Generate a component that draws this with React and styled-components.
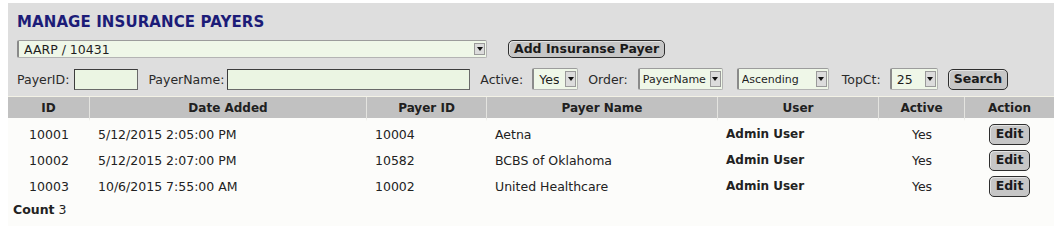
import React from 'react';
import styled, { createGlobalStyle } from 'styled-components';

const GlobalStyle = createGlobalStyle`
  body {
    margin: 0;
    background: #ffffff;
    font-family: "DejaVu Sans", Verdana, sans-serif;
    font-size: 12.5px;
    color: #222;
  }
`;

const columns = [
  { key: 'id', label: 'ID', width: 82, align: 'center' },
  { key: 'added', label: 'Date Added', width: 277 },
  { key: 'payerId', label: 'Payer ID', width: 120 },
  { key: 'name', label: 'Payer Name', width: 231 },
  { key: 'user', label: 'User', width: 161, bold: true },
  { key: 'active', label: 'Active', width: 86, align: 'center' },
  { key: 'action', label: 'Action', width: 89, align: 'center' },
];

const payers = [
  { id: '10001', added: '5/12/2015 2:05:00 PM', payerId: '10004', name: 'Aetna', user: 'Admin User', active: 'Yes' },
  { id: '10002', added: '5/12/2015 2:07:00 PM', payerId: '10582', name: 'BCBS of Oklahoma', user: 'Admin User', active: 'Yes' },
  { id: '10003', added: '10/6/2015 7:55:00 AM', payerId: '10002', name: 'United Healthcare', user: 'Admin User', active: 'Yes' },
];

const DropArrow = () => (
  <ArrowBox>
    <svg width="6" height="4" viewBox="0 0 6 4">
      <path d="M0 0 L6 0 L3 4 Z" fill="#111" />
    </svg>
  </ArrowBox>
);

const Select = ({ value, width, small, tall }) => (
  <SelectBox $width={width} $tall={tall} $small={small}>
    <SelectText $small={small}>{value}</SelectText>
    <DropArrow />
  </SelectBox>
);

export default function App() {
  return (
    <Page>
      <GlobalStyle />
      <Panel>
        <Title>MANAGE INSURANCE PAYERS</Title>
        <PickerRow>
          <Select value="AARP / 10431" width={470} />
          <Button $size="sm">Add Insuranse Payer</Button>
        </PickerRow>
        <FilterRow>
          <Label $first $after={5}>PayerID:</Label>
          <TextInput $width={64} />
          <Label $after={3}>PayerName:</Label>
          <TextInput $width={243} />
          <Label>Active:</Label>
          <Select value="Yes" width={46} tall />
          <Label $after={10}>Order:</Label>
          <Select value="PayerName" width={85} small tall />
          <Spacer />
          <Select value="Ascending" width={92} small tall />
          <Label $before={13} $after={9}>TopCt:</Label>
          <Select value="25" width={48} tall />
          <Button $size="md" $gap={10}>Search</Button>
        </FilterRow>
      </Panel>
      <Grid>
        <colgroup>
          {columns.map((c) => <col key={c.key} style={{ width: c.width }} />)}
        </colgroup>
        <thead>
          <tr>
            {columns.map((c) => <HeadCell key={c.key}>{c.label}</HeadCell>)}
          </tr>
        </thead>
        <tbody>
          {payers.map((p) => (
            <tr key={p.id}>
              {columns.map((c) => (
                <Cell key={c.key} $align={c.align} $bold={c.bold}>
                  {c.key === 'action' ? <Button $size="md" $wide>Edit</Button> : p[c.key]}
                </Cell>
              ))}
            </tr>
          ))}
        </tbody>
      </Grid>
      <Count><b>Count</b> 3</Count>
    </Page>
  );
}

const Page = styled.div`
  padding: 3px 6px 0 8px;
  width: 1046px;
`;

const Panel = styled.div`
  background: #dedede;
  padding: 10px 9px 6px;
  border-bottom: 1px solid #f3f2e6;
`;

const Title = styled.div`
  font-size: 15px;
  line-height: 18px;
  font-weight: 700;
  color: #1c1c78;
  letter-spacing: 0.1px;
`;

const PickerRow = styled.div`
  display: flex;
  align-items: center;
  gap: 21px;
  margin-top: 9px;
  height: 18px;
`;

const FilterRow = styled.div`
  display: flex;
  align-items: center;
  margin-top: 10px;
  height: 22px;
`;

const Label = styled.span`
  margin: 0 ${({ $after }) => ($after != null ? $after : 9)}px 0 ${({ $first, $before }) => ($first ? 0 : $before != null ? $before : 10)}px;
  white-space: nowrap;
  color: #2a2a2a;
`;

const Spacer = styled.span`
  width: 14px;
`;

const TextInput = styled.div`
  width: ${({ $width }) => $width}px;
  height: 21px;
  box-sizing: border-box;
  background: #ebf5e3;
  border: 1px solid #3c3c3c;
  border-right-color: #6a6a6a;
  border-bottom-color: #6a6a6a;
`;

const SelectBox = styled.div`
  position: relative;
  display: flex;
  align-items: center;
  box-sizing: border-box;
  width: ${({ $width }) => $width}px;
  height: ${({ $tall }) => ($tall ? 22 : 18)}px;
  padding: 0 ${({ $small }) => ($small ? 13 : 16)}px 0 ${({ $small }) => ($small ? 3 : 5)}px;
  background: #eff7e8;
  border: 1px solid #b4b4b4;
  border-left: 2px solid #8a8a8a;
  border-top-color: #9c9c9c;
  border-radius: 2px;
`;

const SelectText = styled.span`
  font-size: ${({ $small }) => ($small ? 11 : 12.5)}px;
  white-space: nowrap;
  overflow: hidden;
  color: #1e1e1e;
`;

const ArrowBox = styled.span`
  position: absolute;
  right: 1px;
  top: 2px;
  bottom: 2px;
  width: 11px;
  display: flex;
  align-items: center;
  justify-content: center;
  background: #dcdcdc;
  border: 1px solid #9a9a9a;
  box-sizing: border-box;
`;

const Button = styled.button`
  font-family: "DejaVu Sans", Verdana, sans-serif;
  font-size: 12.5px;
  font-weight: 700;
  color: #1a1a1a;
  background: #c6c6c6;
  border: 1px solid #2e2e2e;
  border-radius: 5px;
  padding: 0 ${({ $wide }) => ($wide ? 6 : 5)}px;
  height: ${({ $size }) => ($size === 'sm' ? 18 : 21)}px;
  margin-left: ${({ $gap }) => $gap || 0}px;
  line-height: 1;
  cursor: pointer;
  box-shadow: inset 1px 1px 0 #e4e4e4;
`;

const Grid = styled.table`
  width: 1046px;
  table-layout: fixed;
  border-collapse: separate;
  border-spacing: 0;
  background: #fcfcfa;
`;

const HeadCell = styled.th`
  height: 21px;
  padding: 0;
  background: #c1c1c1;
  font-size: 12px;
  font-weight: 700;
  color: #202020;
  text-align: center;
  border-right: 1px solid #e4e4e0;
  border-bottom: 3px solid #fcfcfa;
  &:last-child {
    border-right: none;
  }
`;

const Cell = styled.td`
  height: 26px;
  padding: 0 ${({ $align }) => ($align === 'center' ? 0 : 8)}px;
  text-align: ${({ $align }) => $align || 'left'};
  font-size: ${({ $bold }) => ($bold ? 12 : 12.5)}px;
  font-weight: ${({ $bold }) => ($bold ? 700 : 400)};
  vertical-align: middle;
  white-space: nowrap;
`;

const Count = styled.div`
  padding: 3px 5px 0;
  line-height: 16px;
  background: #fcfcfa;
  height: 24px;
`;
